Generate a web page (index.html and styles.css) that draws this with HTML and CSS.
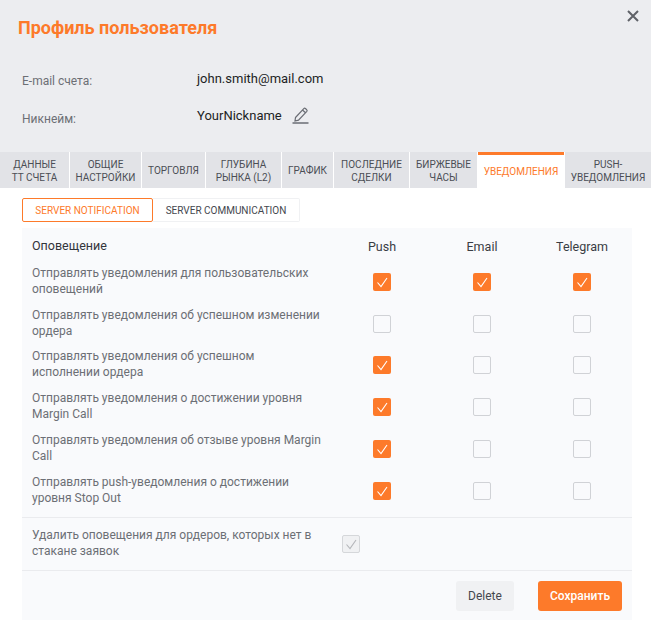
FILE: index.html
```html
<!DOCTYPE html>
<html lang="ru">
<head>
<meta charset="utf-8">
<title>Профиль пользователя</title>
<link rel="stylesheet" href="styles.css">
</head>
<body>
<div class="dialog">
  <header class="head">
    <h1 class="title">Профиль пользователя</h1>
    <svg class="close" viewBox="0 0 12 12" width="12" height="12"><path d="M1 1l10 10M11 1L1 11" fill="none" stroke="#5f6268" stroke-width="2"/></svg>
    <div class="info">
      <div class="info-row email"><span class="info-label">E-mail счета:</span><span class="info-value">john.smith@mail.com</span></div>
      <div class="info-row nick"><span class="info-label">Никнейм:</span><span class="info-value">YourNickname</span>
        <svg class="pencil" viewBox="0 0 18 18" width="18" height="18"><path d="M3.500 11.500L11.800 2.600c.5-.5 1.100-.5 1.600-.1l1.300 1.200c.5.4.5 1.100.1 1.600L6.500 14.200l-3.500 .8zM10.500 4l3 2.800" fill="none" stroke="#6a6d74" stroke-width="1.200"/><path d="M0.500 17h16" stroke="#6a6d74" stroke-width="1.500"/></svg>
      </div>
    </div>
  </header>
  <nav class="tabs">
    <div class="tab t1">ДАННЫЕ<br>ТТ СЧЕТА</div>
    <div class="tab t2">ОБЩИЕ<br>НАСТРОЙКИ</div>
    <div class="tab t3">ТОРГОВЛЯ</div>
    <div class="tab t4">ГЛУБИНА<br>РЫНКА (L2)</div>
    <div class="tab t5">ГРАФИК</div>
    <div class="tab t6">ПОСЛЕДНИЕ<br>СДЕЛКИ</div>
    <div class="tab t7">БИРЖЕВЫЕ<br>ЧАСЫ</div>
    <div class="tab t8 active">УВЕДОМЛЕНИЯ</div>
    <div class="tab t9">PUSH-<br>УВЕДОМЛЕНИЯ</div>
  </nav>
  <div class="subtabs">
    <div class="subtab on">SERVER NOTIFICATION</div>
    <div class="subtab off">SERVER COMMUNICATION</div>
  </div>
  <section class="panel">
    <div class="row headrow"><div class="name">Оповещение</div><div class="col">Push</div><div class="col">Email</div><div class="col">Telegram</div></div>
    <div class="row"><div class="name">Отправлять уведомления для пользовательских оповещений</div><div class="col"><span class="cb on"><svg viewBox="0 0 18 18"><path d="M4.500 9.500l3.500 4 6-8.500"/></svg></span></div><div class="col"><span class="cb on"><svg viewBox="0 0 18 18"><path d="M4.500 9.500l3.500 4 6-8.500"/></svg></span></div><div class="col"><span class="cb on"><svg viewBox="0 0 18 18"><path d="M4.500 9.500l3.500 4 6-8.500"/></svg></span></div></div>
    <div class="row"><div class="name">Отправлять уведомления об успешном изменении ордера</div><div class="col"><span class="cb"></span></div><div class="col"><span class="cb"></span></div><div class="col"><span class="cb"></span></div></div>
    <div class="row"><div class="name">Отправлять уведомления об успешном исполнении ордера</div><div class="col"><span class="cb on"><svg viewBox="0 0 18 18"><path d="M4.500 9.500l3.500 4 6-8.500"/></svg></span></div><div class="col"><span class="cb"></span></div><div class="col"><span class="cb"></span></div></div>
    <div class="row"><div class="name">Отправлять уведомления о достижении уровня Margin Call</div><div class="col"><span class="cb on"><svg viewBox="0 0 18 18"><path d="M4.500 9.500l3.500 4 6-8.500"/></svg></span></div><div class="col"><span class="cb"></span></div><div class="col"><span class="cb"></span></div></div>
    <div class="row"><div class="name">Отправлять уведомления об отзыве уровня Margin Call</div><div class="col"><span class="cb on"><svg viewBox="0 0 18 18"><path d="M4.500 9.500l3.500 4 6-8.500"/></svg></span></div><div class="col"><span class="cb"></span></div><div class="col"><span class="cb"></span></div></div>
    <div class="row"><div class="name">Отправлять push-уведомления о достижении уровня Stop Out</div><div class="col"><span class="cb on"><svg viewBox="0 0 18 18"><path d="M4.500 9.500l3.500 4 6-8.500"/></svg></span></div><div class="col"><span class="cb"></span></div><div class="col"><span class="cb"></span></div></div>
    <div class="row del"><div class="name">Удалить оповещения для ордеров, которых нет в стакане заявок</div><span class="cb dis"><svg viewBox="0 0 18 18"><path d="M4.500 9.500l3.500 4 6-8.500"/></svg></span></div>
    <div class="actions"><button class="btn delete">Delete</button><button class="btn save">Сохранить</button></div>
  </section>
</div>
</body>
</html>
```
FILE: styles.css
```css
* { box-sizing: border-box; }
html, body { margin: 0; padding: 0; }
body { width: 651px; height: 630px; background: #fff; font-family: Roboto, sans-serif; overflow: hidden; }
.dialog { width: 651px; }
.head { position: relative; height: 152px; background: #ecedf0; padding: 17px 18px 0; }
.title { margin: 0; font-size: 18px; line-height: 21px; font-weight: 700; color: #fd7a2a; }
.close { position: absolute; top: 10px; right: 12px; }
.info { padding: 0 4px; margin-top: 30px; }
.info-row { display: flex; align-items: center; height: 20px; }
.nick { margin-top: 17px; }
.info-label { width: 175px; font-size: 12px; color: #6c6f75; position: relative; top: 3px; }
.nick .info-label { top: 4px; }
.info-value { font-size: 13px; color: #1d1f24; }
.pencil { margin-left: 10px; }
.tabs { display: flex; height: 36px; gap: 1px; background: #fff; }
.tab { height: 36px; background: #e2e3e7; display: flex; align-items: center; justify-content: center; text-align: center; font-size: 10px; line-height: 13px; color: #4b4e55; padding-top: 1px; }
.t1 { width: 69px; } .t2 { width: 71px; } .t3 { width: 63px; } .t4 { width: 75px; } .t5 { width: 51px; } .t6 { width: 75px; } .t7 { width: 67px; } .t8 { width: 86px; } .t9 { width: 86px; }
.tab.active { background: #fff; color: #fd7a2a; border-top: 3px solid #fd7a2a; padding-top: 0; }
.subtabs { display: flex; margin: 10px 0 0 22px; height: 24px; }
.subtab { display: flex; align-items: center; justify-content: center; font-size: 10px; height: 24px; }
.subtab.on { width: 131px; color: #fd7a2a; border: 1px solid #fd7a2a; border-radius: 2px; }
.subtab.off { width: 147px; color: #44474e; border: 1px solid #f0f1f3; border-left: 0; border-radius: 0 2px 2px 0; }
.panel { margin: 6px 19px 0 22px; background: #f9fafc; height: 392px; }
.row { display: flex; align-items: center; height: 41.800px; padding-left: 10px; }
.row.headrow { height: 33px; padding-top: 3px; }
.name { width: 300px; flex: none; padding: 0 10px 2px 0; font-size: 12px; line-height: 16px; color: #6c6f75; }
.headrow .name { padding-bottom: 0; font-size: 12.500px; color: #33353b; }
.col { width: 100px; flex: none; display: flex; justify-content: center; font-size: 12.500px; color: #3a3d44; }
.cb { width: 18px; height: 18px; border-radius: 2px; border: 1px solid #d0d2d6; display: block; }
.cb svg { display: block; width: 18px; height: 18px; fill: none; stroke: #fff; stroke-width: 1.100; }
.cb.on { background: #fd7a2a; border: 0; }
.cb.dis { background: #f0f1f3; border-color: #d5d7da; margin-left: 10px; }
.cb.dis svg { margin: -1px; stroke: #b4b6ba; }
.del { height: 54px; border-top: 1px solid #eaebee; border-bottom: 1px solid #eaebee; margin-top: 5px; }
.actions { display: flex; justify-content: flex-end; gap: 24px; padding: 10px 10px 0 0; }
.btn { height: 30px; border: 0; border-radius: 3px; font-family: Roboto, sans-serif; font-size: 12px; }
.delete { width: 58px; background: #f0f1f3; color: #44474e; }
.save { width: 84px; background: #fd7a2a; color: #fff; font-weight: 500; }
```
